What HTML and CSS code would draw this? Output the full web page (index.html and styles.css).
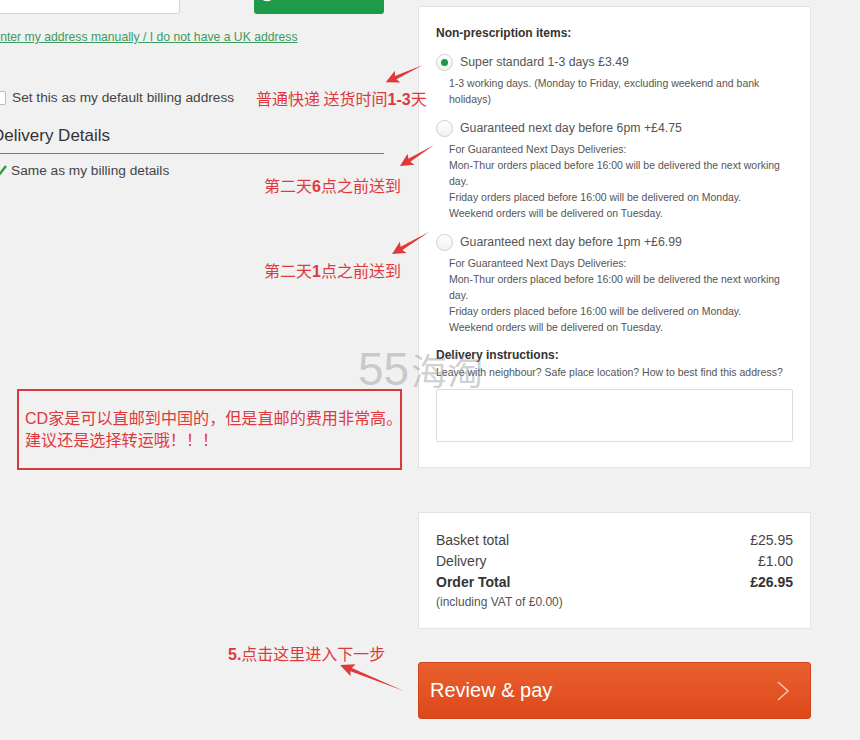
FILE: index.html
```html
<!DOCTYPE html>
<html lang="en">
<head>
    <meta charset="UTF-8">
    <title>Checkout - Delivery</title>
    <link rel="stylesheet" href="styles.css">
</head>
<body>

<div class="page">
    <div class="left-col">
        <div class="postcode-row">
            <input class="postcode-input" type="text">
            <a href="#" class="btn-find">&#9711; Find address</a>
        </div>
        <a href="#" class="manual-link">Enter my address manually / I do not have a UK address</a>

        <label class="check-row default-billing">
            <span class="checkbox"></span>
            Set this as my default billing address
        </label>

        <h2 class="section-title">Delivery Details</h2>

        <div class="check-row same-billing">
            <svg class="tick" width="13" height="12" viewBox="0 0 13 12">
                <polyline points="1,7 4.5,10.5 12,1" fill="none" stroke="#2f9a3f" stroke-width="2.4"/>
            </svg>
            Same as my billing details
        </div>
    </div>

    <div class="right-col">
        <div class="card delivery-card">
            <h3 class="card-title">Non-prescription items:</h3>

            <div class="option">
                <div class="option-row">
                    <span class="radio checked"></span>
                    <span class="option-label">Super standard 1-3 days £3.49</span>
                </div>
                <p class="option-desc">1-3 working days. (Monday to Friday, excluding weekend and bank holidays)</p>
            </div>

            <div class="option">
                <div class="option-row">
                    <span class="radio"></span>
                    <span class="option-label">Guaranteed next day before 6pm +£4.75</span>
                </div>
                <p class="option-desc">For Guaranteed Next Days Deliveries:<br>
                    Mon-Thur orders placed before 16:00 will be delivered the next working day.<br>
                    Friday orders placed before 16:00 will be delivered on Monday.<br>
                    Weekend orders will be delivered on Tuesday.</p>
            </div>

            <div class="option">
                <div class="option-row">
                    <span class="radio"></span>
                    <span class="option-label">Guaranteed next day before 1pm +£6.99</span>
                </div>
                <p class="option-desc">For Guaranteed Next Days Deliveries:<br>
                    Mon-Thur orders placed before 16:00 will be delivered the next working day.<br>
                    Friday orders placed before 16:00 will be delivered on Monday.<br>
                    Weekend orders will be delivered on Tuesday.</p>
            </div>

            <h3 class="card-title instructions-title">Delivery instructions:</h3>
            <p class="instructions-hint">Leave with neighbour? Safe place location? How to best find this address?</p>
            <textarea class="instructions-box"></textarea>
        </div>

        <div class="card summary-card">
            <div class="sum-row"><span>Basket total</span><span>£25.95</span></div>
            <div class="sum-row"><span>Delivery</span><span>£1.00</span></div>
            <div class="sum-row total"><span>Order Total</span><span>£26.95</span></div>
            <div class="vat">(including VAT of £0.00)</div>
        </div>

        <a href="#" class="btn-pay">
            <span>Review &amp; pay</span>
            <svg class="chevron" width="14" height="22" viewBox="0 0 14 22">
                <polyline points="2,2 12,11 2,20" fill="none" stroke="#f7c2a8" stroke-width="1.6"/>
            </svg>
        </a>
    </div>
</div>

<!-- annotations drawn over the screenshot -->
<div class="notes">
    <span class="note note-1">普通快递 送货时间<b>1-3</b>天</span>
    <span class="note note-2">第二天<b>6</b>点之前送到</span>
    <span class="note note-3">第二天<b>1</b>点之前送到</span>
    <div class="note-box">
        <b>CD</b>家是可以直邮到中国的，但是直邮的费用非常高。<br>
        建议还是选择转运哦！！！
    </div>
    <span class="note note-5"><b>5.</b>点击这里进入下一步</span>
    <span class="watermark">55<span class="wm-cn">海淘</span></span>

    <svg class="arrows" width="860" height="740" viewBox="0 0 860 740">
        <g fill="#e2383a">
            <g transform="translate(423 65) rotate(155.3)">
                <polygon points="0,0 30,-1.8 28,-6.5 41,0 28,6.5 30,1.8"/>
            </g>
            <g transform="translate(434 145) rotate(148.3)">
                <polygon points="0,0 29,-1.8 27,-6.5 40,0 27,6.5 29,1.8"/>
            </g>
            <g transform="translate(429 232) rotate(149.3)">
                <polygon points="0,0 32,-1.8 30,-6.5 43,0 30,6.5 32,1.8"/>
            </g>
            <g transform="translate(404 691) rotate(202.1)">
                <polygon points="0,0 57,-1.8 55,-6.5 69,0 55,6.5 57,1.8"/>
            </g>
        </g>
    </svg>
</div>

</body>
</html>
```

FILE: styles.css
```css
body {
    margin: 0;
    background-color: #f1f1f1;
    font-family: "Liberation Sans", Arial, sans-serif;
    color: #333;
    overflow: hidden;
}
.page {
    display: flex;
    gap: 34px;
    width: 860px;
    height: 740px;
}

/* left column */
.left-col {
    width: 392px;
    margin-left: -8px;
    flex-shrink: 0;
}
.postcode-row {
    display: flex;
    gap: 74px;
    margin-top: -26px;
    height: 40px;
}
.postcode-input {
    width: 188px;
    height: 40px;
    box-sizing: border-box;
    border: 1px solid #d4d4d4;
    border-radius: 3px;
    background: #fff;
}
.btn-find {
    width: 130px;
    height: 40px;
    box-sizing: border-box;
    padding-top: 8px;
    background-color: #1f9a48;
    color: #fff;
    border-radius: 3px;
    text-align: center;
    font-weight: bold;
    font-size: 16px;
    text-decoration: none;
}
.manual-link {
    display: block;
    margin-top: 15px;
    font-size: 12.2px;
    line-height: 16px;
    color: #3d9b5e;
}
.check-row {
    display: flex;
    align-items: center;
    gap: 6px;
    font-size: 13.7px;
    line-height: 18px;
    color: #444;
}
.default-billing {
    margin-top: 44px;
}
.checkbox {
    width: 12px;
    height: 12px;
    border: 1px solid #bbb;
    border-radius: 2px;
    background: #fff;
}
.section-title {
    margin: 18px 0 0;
    padding-bottom: 6px;
    border-bottom: 1px solid #37a05a;
    font-size: 17px;
    line-height: 22px;
    font-weight: normal;
    color: #333;
}
.same-billing {
    margin-top: 8px;
}
.tick {
    margin-left: 2px;
    margin-right: -2px;
}

/* right column */
.right-col {
    width: 393px;
    flex-shrink: 0;
}
.card {
    background: #fff;
    border: 1px solid #e3e3e3;
    padding: 0 17px;
}
.delivery-card {
    margin-top: 6px;
    padding-top: 18px;
    padding-bottom: 25px;
}
.card-title {
    margin: 0;
    font-size: 12px;
    line-height: 16px;
    color: #333;
}
.option {
    margin-top: 12px;
}
.option-row {
    display: flex;
    align-items: center;
    gap: 7px;
    height: 18px;
}
.radio {
    width: 15px;
    height: 15px;
    border: 1px solid #cfcfcf;
    border-radius: 50%;
    background: linear-gradient(#fff, #f1f1f1);
    display: flex;
    align-items: center;
    justify-content: center;
}
.radio.checked::after {
    content: "";
    width: 7px;
    height: 7px;
    border-radius: 50%;
    background: #1a9a48;
}
.option-label {
    font-size: 12.3px;
    color: #555;
}
.option-desc {
    margin: 4px 0 0 13px;
    font-size: 10.5px;
    line-height: 16px;
    color: #555;
}
.instructions-title {
    margin-top: 12px;
}
.instructions-hint {
    margin: 1px 0 0;
    font-size: 10.5px;
    line-height: 16px;
    color: #555;
}
.instructions-box {
    display: block;
    width: 100%;
    height: 53px;
    box-sizing: border-box;
    margin-top: 9px;
    border: 1px solid #dcdcdc;
    border-radius: 2px;
    resize: none;
}
.summary-card {
    margin-top: 44px;
    padding-top: 17px;
    padding-bottom: 17px;
}
.sum-row {
    display: flex;
    justify-content: space-between;
    font-size: 14px;
    line-height: 21px;
    color: #444;
}
.sum-row.total {
    font-weight: bold;
    color: #333;
}
.vat {
    font-size: 12px;
    line-height: 18px;
    color: #555;
}
.btn-pay {
    display: flex;
    justify-content: space-between;
    align-items: center;
    margin-top: 33px;
    height: 57px;
    box-sizing: border-box;
    padding: 0 20px 0 11px;
    background: linear-gradient(#ea602f, #dd481b);
    border: 1px solid #cf4519;
    border-radius: 3px;
    color: #fff;
    font-size: 20px;
    text-decoration: none;
}

/* annotations */
.notes {
    position: absolute;
    left: 0;
    top: 0;
    width: 860px;
    height: 740px;
    pointer-events: none;
    font-family: "Noto Sans CJK SC", "Liberation Sans", sans-serif;
    color: #e0393d;
}
.arrows {
    position: absolute;
    left: 0;
    top: 0;
}
.note {
    position: absolute;
    font-size: 16px;
    line-height: 20px;
    white-space: nowrap;
}
.note b {
    font-family: "Liberation Sans", Arial, sans-serif;
}
.note-1 { left: 256px; top: 88px; }
.note-2 { left: 264px; top: 175px; }
.note-3 { left: 264px; top: 260px; }
.note-5 { left: 228px; top: 643px; }
.note-box {
    position: absolute;
    left: 17px;
    top: 389px;
    width: 385px;
    height: 81px;
    padding: 16px 0 0 6px;
    box-sizing: border-box;
    border: 2px solid #d8393c;
    font-size: 16.1px;
    line-height: 21px;
    white-space: nowrap;
}
.note-box b {
    font-family: "Liberation Sans", Arial, sans-serif;
    font-weight: normal;
}
.watermark {
    position: absolute;
    left: 358px;
    top: 344px;
    font-family: "Liberation Sans", Arial, sans-serif;
    font-size: 46px;
    line-height: 50px;
    color: rgba(150, 150, 150, 0.45);
    white-space: nowrap;
}
.wm-cn {
    font-family: "Noto Sans CJK SC", sans-serif;
    font-size: 36px;
    margin-left: 2px;
}
```
